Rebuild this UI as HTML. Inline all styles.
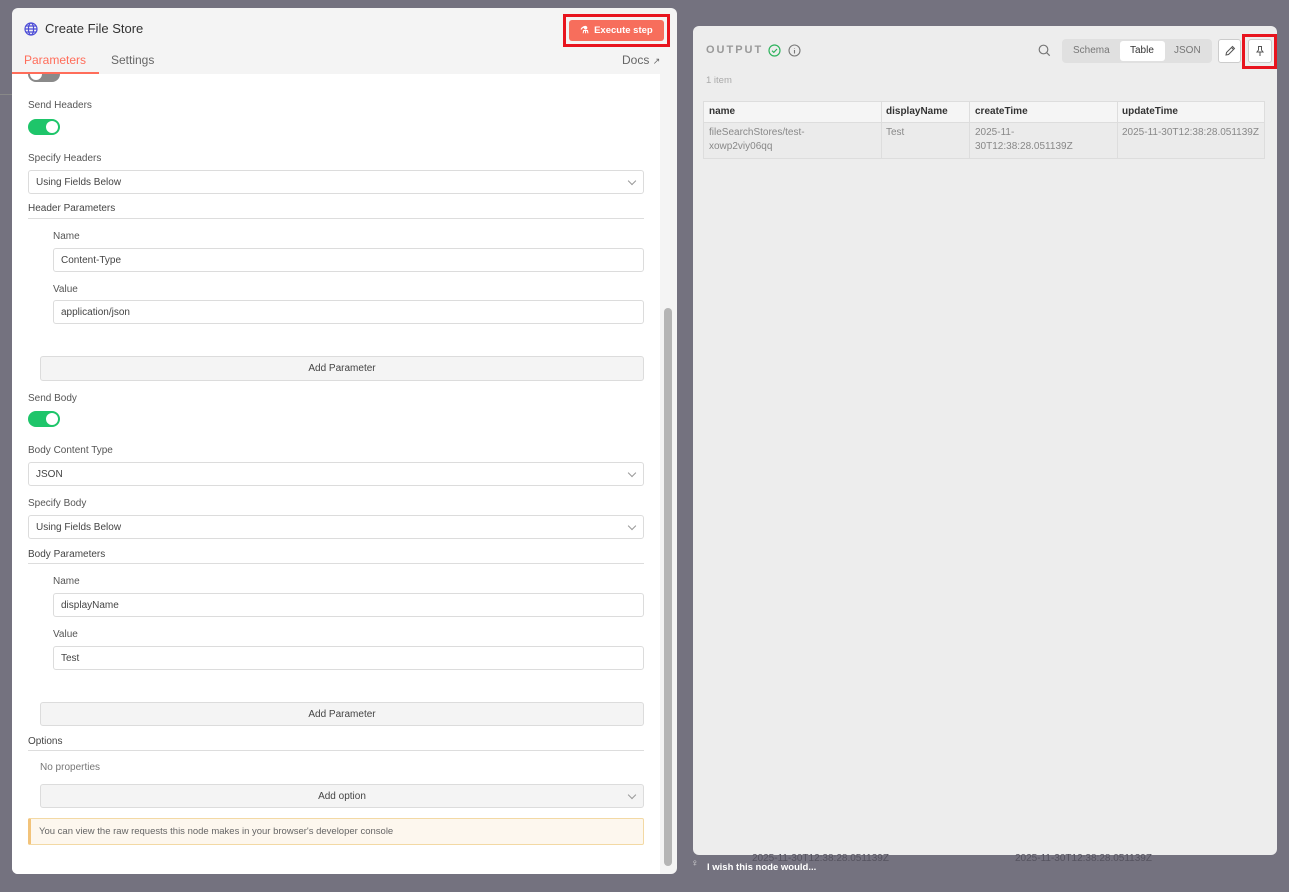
<!DOCTYPE html>
<html><head><meta charset="utf-8"><style>
*{box-sizing:border-box;margin:0;padding:0}
body{width:1289px;height:892px;background:#74727f;font-family:"Liberation Sans",sans-serif;position:relative;overflow:hidden;color:#555}
.a{position:absolute}
.lbl{position:absolute;font-size:10px;color:#555;line-height:12px}
.inp{position:absolute;background:#fff;border:1px solid #dcdcdc;border-radius:3px;font-size:10px;color:#444;padding-left:7px;display:flex;align-items:center}
.btn{position:absolute;background:#f4f4f4;border:1px solid #dcdcdc;border-radius:3px;font-size:10px;color:#444;display:flex;align-items:center;justify-content:center}
.chev{position:absolute;right:8px;top:7px;width:6px;height:6px;border-right:1px solid #999;border-bottom:1px solid #999;transform:rotate(45deg)}
.line{position:absolute;height:1px;background:#ddd}
.tog{position:absolute;width:32px;height:16px;border-radius:8px;background:#1ec56a}
.tog::after{content:"";position:absolute;right:2px;top:2px;width:12px;height:12px;border-radius:50%;background:#fff}
.th{position:absolute;font-size:10px;font-weight:bold;color:#333}
.td{position:absolute;font-size:10px;color:#888;line-height:14px}
</style></head><body>
<div class="a" style="left:0;top:94px;width:12px;height:1px;background:#888"></div>
<!-- left panel -->
<div class="a" style="left:12px;top:8px;width:665px;height:866px;background:#f4f4f4;border-radius:6px;overflow:hidden">
  <div class="a" style="left:0;top:66px;width:648px;height:800px;background:#fff"></div>
  <div class="a" style="left:652px;top:300px;width:8px;height:558px;background:#b5b5b5;border-radius:4px"></div>
</div>
<svg class="a" style="left:24px;top:22px" width="14" height="14" viewBox="0 0 14 14" fill="none" stroke="#4b4bd6" stroke-width="1.2"><circle cx="7" cy="7" r="6"/><ellipse cx="7" cy="7" rx="2.6" ry="6"/><path d="M1 7h12M2 4h10M2 10h10"/></svg>
<div class="a" style="left:45px;top:21px;font-size:13px;color:#333">Create File Store</div>
<div class="a" style="left:563px;top:14px;width:107px;height:33px;border:3px solid #e8141e"></div>
<div class="a" style="left:569px;top:20px;width:95px;height:21px;background:#f76e5c;border-radius:3px;color:#fff;font-size:9.5px;font-weight:bold;display:flex;align-items:center;justify-content:center">⚗&nbsp; Execute step</div>
<div class="a" style="left:24px;top:53px;font-size:12px;color:#ff6d5a">Parameters</div>
<div class="a" style="left:12px;top:72px;width:87px;height:2px;background:#ff6d5a"></div>
<div class="a" style="left:111px;top:53px;font-size:12px;color:#666">Settings</div>
<div class="a" style="left:622px;top:53px;font-size:12px;color:#666">Docs <span style="font-size:9px">↗</span></div>
<div class="a" style="left:28px;top:66px;width:32px;height:16px;border-radius:8px;background:#8a8a8a;clip-path:inset(8px 0 0 0)"></div>
<div class="a" style="left:30px;top:68px;width:12px;height:12px;border-radius:50%;background:#fff;clip-path:inset(6px 0 0 0)"></div>

<div class="lbl" style="left:28px;top:100px">Send Headers</div>
<div class="tog" style="left:28px;top:119px"></div>
<div class="lbl" style="left:28px;top:153px">Specify Headers</div>
<div class="inp" style="left:28px;top:170px;width:616px;height:24px">Using Fields Below<span class="chev"></span></div>
<div class="lbl" style="left:28px;top:203px;color:#444">Header Parameters</div>
<div class="line" style="left:28px;top:218px;width:616px"></div>
<div class="lbl" style="left:53px;top:231px">Name</div>
<div class="inp" style="left:53px;top:248px;width:591px;height:24px">Content-Type</div>
<div class="lbl" style="left:53px;top:284px">Value</div>
<div class="inp" style="left:53px;top:300px;width:591px;height:24px">application/json</div>
<div class="btn" style="left:40px;top:356px;width:604px;height:25px">Add Parameter</div>

<div class="lbl" style="left:28px;top:393px">Send Body</div>
<div class="tog" style="left:28px;top:411px"></div>
<div class="lbl" style="left:28px;top:445px">Body Content Type</div>
<div class="inp" style="left:28px;top:462px;width:616px;height:24px">JSON<span class="chev"></span></div>
<div class="lbl" style="left:28px;top:498px">Specify Body</div>
<div class="inp" style="left:28px;top:515px;width:616px;height:24px">Using Fields Below<span class="chev"></span></div>
<div class="lbl" style="left:28px;top:549px;color:#444">Body Parameters</div>
<div class="line" style="left:28px;top:563px;width:616px"></div>
<div class="lbl" style="left:53px;top:576px">Name</div>
<div class="inp" style="left:53px;top:593px;width:591px;height:24px">displayName</div>
<div class="lbl" style="left:53px;top:629px">Value</div>
<div class="inp" style="left:53px;top:646px;width:591px;height:24px">Test</div>
<div class="btn" style="left:40px;top:702px;width:604px;height:24px">Add Parameter</div>

<div class="lbl" style="left:28px;top:736px;color:#444">Options</div>
<div class="line" style="left:28px;top:750px;width:616px"></div>
<div class="lbl" style="left:40px;top:762px;color:#777">No properties</div>
<div class="btn" style="left:40px;top:784px;width:604px;height:24px">Add option<span class="chev"></span></div>
<div class="a" style="left:28px;top:818px;width:616px;height:27px;background:#fdf7ee;border:1px solid #f3d9a4;border-left:3px solid #f2c37a;border-radius:2px;font-size:9.5px;color:#666;padding-left:8px;display:flex;align-items:center">You can view the raw requests this node makes in your browser's developer console</div>

<!-- right panel -->
<div class="a" style="left:693px;top:26px;width:584px;height:829px;background:#ededed;border-radius:6px"></div>
<div class="a" style="left:706px;top:44px;font-size:11px;font-weight:bold;color:#999;letter-spacing:2px">OUTPUT</div>
<svg class="a" style="left:768px;top:44px" width="13" height="13" viewBox="0 0 13 13" fill="none" stroke="#2fb35e" stroke-width="1.2"><circle cx="6.5" cy="6.5" r="5.5"/><path d="M4 6.7l1.8 1.7L9 5"/></svg>
<svg class="a" style="left:788px;top:44px" width="13" height="13" viewBox="0 0 13 13" fill="none" stroke="#777" stroke-width="1.1"><circle cx="6.5" cy="6.5" r="5.5"/><path d="M6.5 6v3.5M6.5 4v.5"/></svg>
<svg class="a" style="left:1038px;top:44px" width="13" height="13" viewBox="0 0 13 13" fill="none" stroke="#777" stroke-width="1.2"><circle cx="5.5" cy="5.5" r="4.3"/><path d="M8.7 8.7l3 3"/></svg>
<div class="a" style="left:1062px;top:39px;width:150px;height:24px;background:#e0e0e0;border-radius:4px"></div>
<div class="a" style="left:1120px;top:41px;width:45px;height:20px;background:#fff;border-radius:3px"></div>
<div class="a" style="left:1073px;top:45px;font-size:10px;color:#777">Schema</div>
<div class="a" style="left:1130px;top:45px;font-size:10px;color:#333">Table</div>
<div class="a" style="left:1174px;top:45px;font-size:10px;color:#777">JSON</div>
<div class="a" style="left:1218px;top:39px;width:23px;height:24px;background:#fff;border:1px solid #ccc;border-radius:3px"></div>
<svg class="a" style="left:1224px;top:45px" width="12" height="12" viewBox="0 0 12 12" fill="none" stroke="#555" stroke-width="1"><path d="M2 10l.5-2.5L8.5 1.5l2 2L4.5 9.5zM7.5 2.5l2 2"/></svg>
<div class="a" style="left:1248px;top:39px;width:24px;height:24px;background:#fff;border:1px solid #ccc;border-radius:3px"></div>
<svg class="a" style="left:1254px;top:45px" width="12" height="12" viewBox="0 0 12 12" fill="none" stroke="#555" stroke-width="1"><path d="M4 1.5h4M4.5 1.5v3.5L3 7h6L7.5 5V1.5M6 7v4"/></svg>
<div class="a" style="left:1242px;top:34px;width:35px;height:35px;border:3px solid #e8141e"></div>
<div class="a" style="left:706px;top:75px;font-size:9.5px;color:#aaa">1 item</div>
<div class="a" style="left:703px;top:101px;width:562px;height:58px;border:1px solid #ddd;background:#ebebeb"></div>
<div class="a" style="left:704px;top:102px;width:560px;height:21px;background:#f5f5f5;border-bottom:1px solid #ddd"></div>
<div class="a" style="left:881px;top:101px;width:1px;height:58px;background:#ddd"></div>
<div class="a" style="left:969px;top:101px;width:1px;height:58px;background:#ddd"></div>
<div class="a" style="left:1117px;top:101px;width:1px;height:58px;background:#ddd"></div>
<div class="th" style="left:709px;top:106px">name</div>
<div class="th" style="left:886px;top:106px">displayName</div>
<div class="th" style="left:975px;top:106px">createTime</div>
<div class="th" style="left:1122px;top:106px">updateTime</div>
<div class="td" style="left:709px;top:126px">fileSearchStores/test-<br>xowp2viy06qq</div>
<div class="td" style="left:886px;top:126px">Test</div>
<div class="td" style="left:975px;top:126px">2025-11-<br>30T12:38:28.051139Z</div>
<div class="td" style="left:1122px;top:126px">2025-11-30T12:38:28.051139Z</div>

<div class="a" style="left:752px;top:853px;font-size:10px;color:#55535f">2025-11-30T12:38:28.051139Z</div>
<div class="a" style="left:1015px;top:853px;font-size:10px;color:#55535f">2025-11-30T12:38:28.051139Z</div>
<div class="a" style="left:691px;top:858px;font-size:10px;color:#ddd">♀</div>
<div class="a" style="left:707px;top:862px;font-size:9.5px;font-weight:bold;color:#fff">I wish this node would...</div>
</body></html>
